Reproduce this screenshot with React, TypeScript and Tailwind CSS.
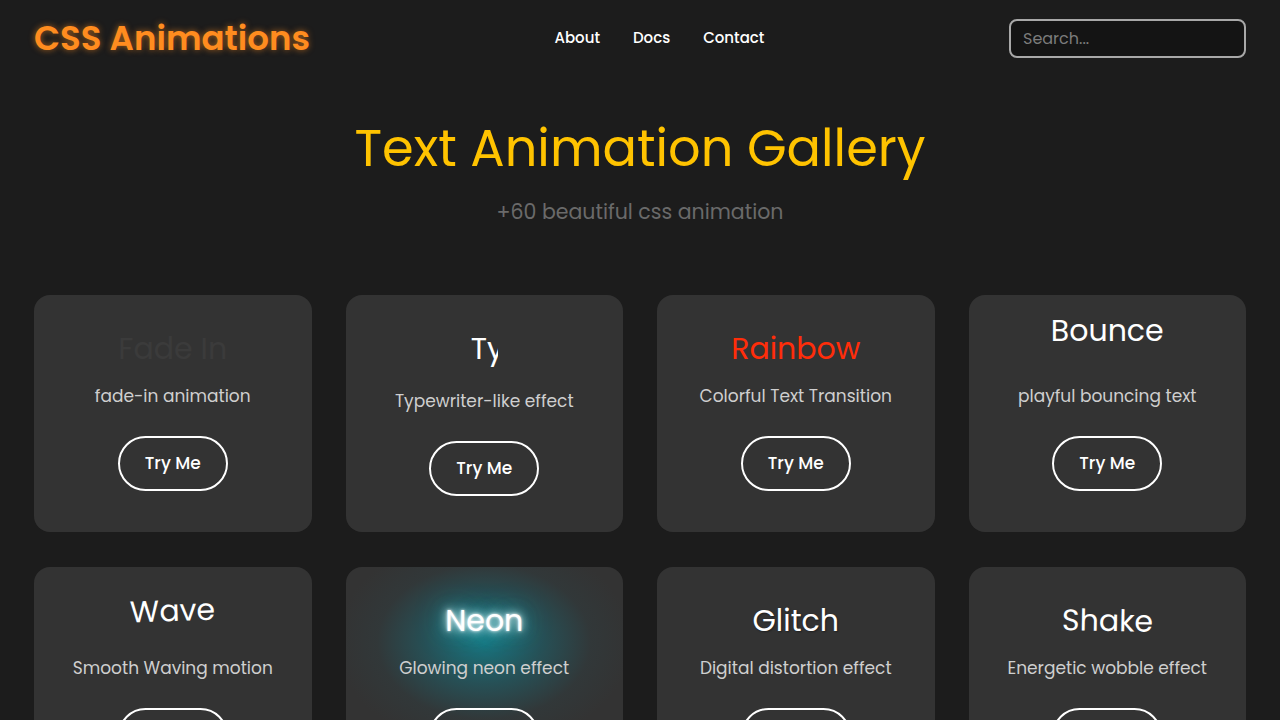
const font = { fontFamily: '"Poppins", "DejaVu Sans", "Noto Sans", sans-serif' };

const cards = [
  { title: "Fade In", desc: "fade-in animation", titleClass: "text-[#3b3b3b]" },
  {
    title: "Typewriter",
    desc: "Typewriter-like effect",
    titleClass: "text-white mb-[5px] w-[27px] overflow-hidden whitespace-nowrap",
  },
  { title: "Rainbow", desc: "Colorful Text Transition", titleClass: "text-[#ff2d0a]" },
  { title: "Bounce", desc: "playful bouncing text", titleClass: "text-white -translate-y-[18px]" },
  { title: "Wave", desc: "Smooth Waving motion", titleClass: "text-white -translate-y-[10px] -rotate-2" },
  {
    title: "Neon",
    desc: "Glowing neon effect",
    glow: true,
    titleClass:
      "relative text-white [text-shadow:0_0_3px_#fff,0_0_8px_#eff,0_0_16px_rgba(120,230,240,0.9),0_0_30px_rgba(0,200,220,0.8)]",
  },
  { title: "Glitch", desc: "Digital distortion effect", titleClass: "text-white [text-shadow:1px_1px_2px_rgba(0,0,0,0.4)]" },
  { title: "Shake", desc: "Energetic wobble effect", titleClass: "text-white rotate-1" },
];

type CardProps = { title: string; desc: string; titleClass: string; glow?: boolean };

function Card({ title, desc, titleClass, glow }: CardProps) {
  return (
    <div className="relative flex h-[237px] flex-col items-center overflow-hidden rounded-2xl bg-[#333333] pt-[31px]">
      {glow && (
        <div className="pointer-events-none absolute left-1/2 top-[-30px] h-[210px] w-[290px] -translate-x-1/2 bg-[radial-gradient(ellipse_at_center,rgba(25,120,130,0.95)_0%,rgba(30,100,110,0.6)_28%,rgba(45,70,75,0.25)_52%,transparent_72%)]" />
      )}
      <h3 className={`h-[46px] text-[30px] leading-[46px] font-normal ${titleClass}`}>{title}</h3>
      <p className="relative mt-[12px] text-[17px] leading-[24px] text-[#cfcfcf]">{desc}</p>
      <button className="relative mt-[28px] h-[55px] w-[110px] shrink-0 rounded-full border-2 border-white text-[17px] font-medium text-white">
        Try Me
      </button>
    </div>
  );
}

export default function App() {
  return (
    <div className="min-h-screen overflow-hidden bg-[#1c1c1c]" style={font}>
      <header className="flex h-[77px] items-center justify-between px-[34px]">
        <a className="text-[34px] font-semibold text-[#ff8c1f] [text-shadow:0_0_6px_rgba(255,140,31,0.6)]">
          CSS Animations
        </a>
        <nav className="flex items-center gap-[33px] text-[15px] font-medium text-white">
          <a>About</a>
          <a>Docs</a>
          <a>Contact</a>
        </nav>
        <input
          placeholder="Search..."
          className="h-[39px] w-[237px] rounded-lg border-2 border-[#a8a8a8] bg-[#141414] px-[12px] text-[16px] text-white outline-none placeholder:text-[#7c7c7c]"
        />
      </header>

      <section className="flex flex-col items-center pt-[37px]">
        <h1 className="text-[51px] leading-[68px] font-normal text-[#ffc300]">Text Animation Gallery</h1>
        <p className="mt-[15px] text-[20.5px] leading-[30px] text-[#6a6a6a]">+60 beautiful css animation</p>
      </section>

      <main className="grid grid-cols-4 gap-x-[34px] gap-y-[35px] px-[34px] pt-[68px]">
        {cards.map((c) => (
          <Card key={c.title} {...c} />
        ))}
      </main>
    </div>
  );
}
